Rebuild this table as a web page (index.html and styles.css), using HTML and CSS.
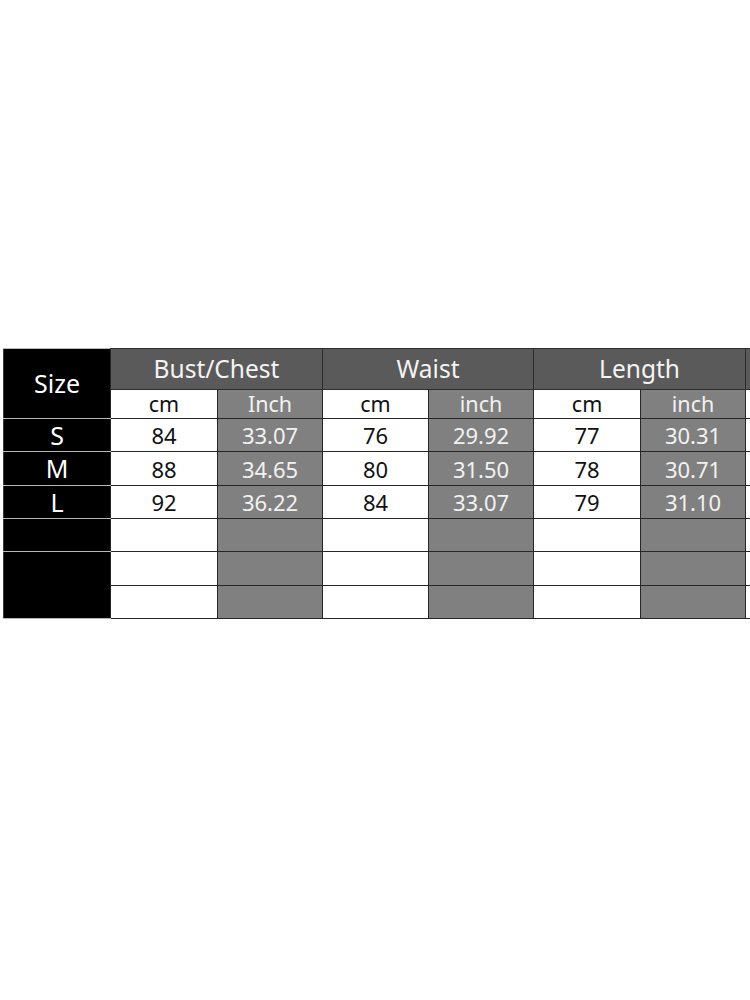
FILE: index.html
```html
<!DOCTYPE html>
<html lang="en">
<head>
<meta charset="utf-8">
<title>Size chart</title>
<link rel="stylesheet" href="styles.css">
</head>
<body>
<main class="page">
  <table class="chart">
    <colgroup>
      <col class="c-size">
      <col class="c-a"><col class="c-b">
      <col class="c-c"><col class="c-b">
      <col class="c-a"><col class="c-d">
      <col class="c-more">
    </colgroup>
    <tr class="r-head">
      <th class="size" rowspan="2">Size</th>
      <th class="grp" colspan="2">Bust/Chest</th>
      <th class="grp" colspan="2">Waist</th>
      <th class="grp" colspan="2">Length</th>
      <th class="grp"></th>
    </tr>
    <tr class="r-sub">
      <td class="cm">cm</td><td class="in">Inch</td>
      <td class="cm">cm</td><td class="in">inch</td>
      <td class="cm">cm</td><td class="in">inch</td>
      <td class="cm"></td>
    </tr>
    <tr class="r-a">
      <th class="size">S</th>
      <td class="cm">84</td><td class="in">33.07</td>
      <td class="cm">76</td><td class="in">29.92</td>
      <td class="cm">77</td><td class="in">30.31</td>
      <td class="cm"></td>
    </tr>
    <tr class="r-b">
      <th class="size">M</th>
      <td class="cm">88</td><td class="in">34.65</td>
      <td class="cm">80</td><td class="in">31.50</td>
      <td class="cm">78</td><td class="in">30.71</td>
      <td class="cm"></td>
    </tr>
    <tr class="r-a">
      <th class="size">L</th>
      <td class="cm">92</td><td class="in">36.22</td>
      <td class="cm">84</td><td class="in">33.07</td>
      <td class="cm">79</td><td class="in">31.10</td>
      <td class="cm"></td>
    </tr>
    <tr class="r-a">
      <th class="size"></th>
      <td class="cm"></td><td class="in"></td>
      <td class="cm"></td><td class="in"></td>
      <td class="cm"></td><td class="in"></td>
      <td class="cm"></td>
    </tr>
    <tr class="r-b">
      <th class="size" rowspan="2"></th>
      <td class="cm"></td><td class="in"></td>
      <td class="cm"></td><td class="in"></td>
      <td class="cm"></td><td class="in"></td>
      <td class="cm"></td>
    </tr>
    <tr class="r-a">
      <td class="cm"></td><td class="in"></td>
      <td class="cm"></td><td class="in"></td>
      <td class="cm"></td><td class="in"></td>
      <td class="cm"></td>
    </tr>
  </table>
</main>
</body>
</html>
```

FILE: styles.css
```css
html, body {
  margin: 0;
  padding: 0;
  background: #ffffff;
  overflow: hidden;
}

.page {
  width: 750px;
  height: 1000px;
  padding: 348px 0 0 3px;
  box-sizing: border-box;
  overflow: hidden;
}

.chart {
  border-collapse: collapse;
  table-layout: fixed;
  width: 848px;
  font-family: "Noto Sans", "Open Sans", "DejaVu Sans", sans-serif;
  color: #111111;
}

.c-size { width: 107px; }
.c-a { width: 107px; }
.c-b { width: 105px; }
.c-c { width: 106px; }
.c-d { width: 105px; }
.c-more { width: 106px; }

.chart th,
.chart td {
  padding: 0;
  text-align: center;
  vertical-align: middle;
  border: 1px solid #262626;
  line-height: 1;
  white-space: nowrap;
}

.r-head { height: 41px; }
.r-sub { height: 29px; }
.r-a { height: 33px; }
.r-b { height: 34px; }

.chart .size {
  background: #000000;
  color: #ffffff;
  font-weight: normal;
  font-size: 25px;
  border-top-color: #b8b8b8;
  border-bottom-color: #b8b8b8;
  border-left-color: #3a3a3a;
  border-right-color: #262626;
}

.chart .grp {
  background: #5a5a5a;
  color: #f4f4f4;
  font-weight: normal;
  font-size: 24.5px;
  border-color: #2e2e2e;
}

.chart .cm {
  background: #ffffff;
  color: #111111;
  font-size: 22px;
}

.chart .in {
  background: #808080;
  color: #f2f2f2;
  font-size: 22px;
}

.r-sub .cm,
.r-sub .in {
  font-size: 21.5px;
}
```
